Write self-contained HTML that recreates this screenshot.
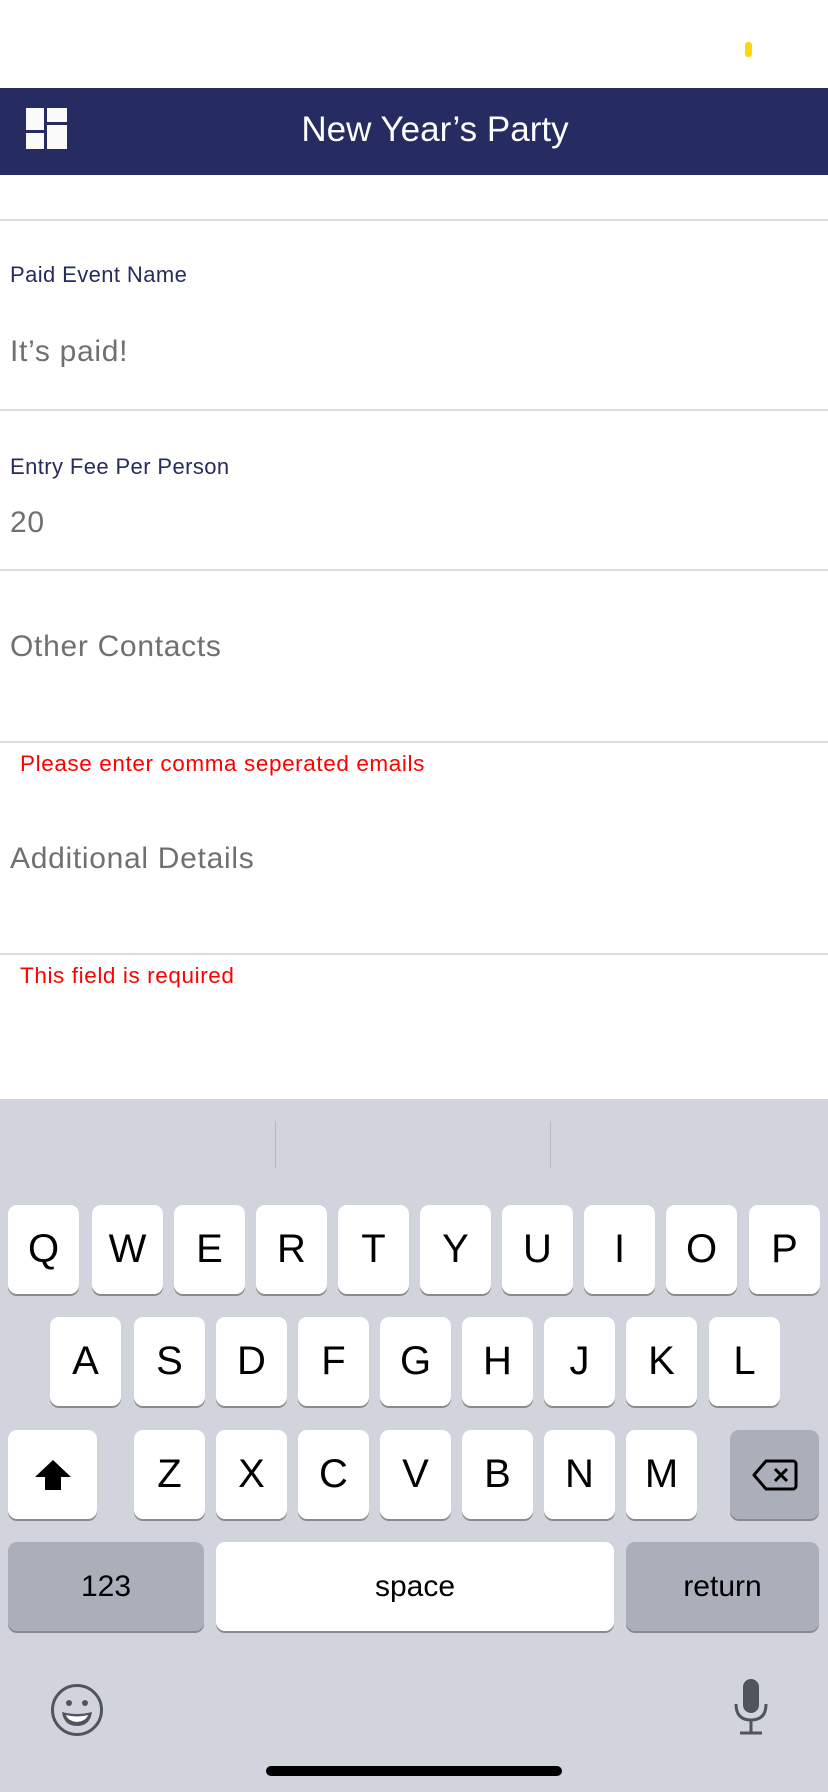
<!DOCTYPE html>
<html><head><meta charset="utf-8"><style>
*{margin:0;padding:0;box-sizing:border-box}
body{width:828px;height:1792px;position:relative;background:#fff;font-family:"Liberation Sans",sans-serif;overflow:hidden}
.a{position:absolute}
.line{position:absolute;left:0;width:828px;height:2px;background:#dcdcdc}
.lbl{position:absolute;left:10px;font-size:22px;letter-spacing:0.4px;color:#262b60}
.val{position:absolute;left:10px;font-size:30px;letter-spacing:0.7px;color:#707070}
.err{position:absolute;left:20px;font-size:22.5px;letter-spacing:0.6px;color:#fe0000}
.kb{position:absolute;left:0;top:1099px;width:828px;height:693px;background:#d1d4dc}
.k{position:absolute;width:71px;height:89px;background:#fff;border-radius:9px;box-shadow:0 2px 0 #898a8e;font-size:40px;color:#000;text-align:center;line-height:89px}
.g{background:#abafba}
</style></head><body>
<div class="a" style="left:745px;top:42px;width:7px;height:15px;border-radius:3px;background:#ffd60a"></div>
<div class="a" style="left:0;top:88px;width:828px;height:87px;background:#262b61"></div>
<svg class="a" style="left:26px;top:108px" width="41" height="41" viewBox="0 0 41 41"><rect x="0" y="0" width="18" height="22" fill="#fafafa"/><rect x="0" y="25" width="18" height="16" fill="#fafafa"/><rect x="21" y="0" width="20" height="14" fill="#fafafa"/><rect x="21" y="17" width="20" height="24" fill="#fafafa"/></svg>
<div class="a" style="left:0;top:110px;width:870px;text-align:center;font-size:35px;color:#fff">New Year’s Party</div>
<div class="line" style="top:219px"></div>
<div class="lbl" style="top:262px">Paid Event Name</div>
<div class="val" style="top:335px">It’s paid!</div>
<div class="line" style="top:409px"></div>
<div class="lbl" style="top:454px">Entry Fee Per Person</div>
<div class="val" style="top:506px">20</div>
<div class="line" style="top:569px"></div>
<div class="val" style="top:630px">Other Contacts</div>
<div class="line" style="top:741px"></div>
<div class="err" style="top:751px">Please enter comma seperated emails</div>
<div class="val" style="top:842px">Additional Details</div>
<div class="line" style="top:953px"></div>
<div class="err" style="top:963px">This field is required</div>
<div class="kb">
<div class="a" style="left:275px;top:22px;width:1px;height:47px;background:#b5b8bf"></div>
<div class="a" style="left:550px;top:22px;width:1px;height:47px;background:#b5b8bf"></div>
</div>
<div class="k" style="left:8px;top:1205px">Q</div>
<div class="k" style="left:92px;top:1205px">W</div>
<div class="k" style="left:174px;top:1205px">E</div>
<div class="k" style="left:256px;top:1205px">R</div>
<div class="k" style="left:338px;top:1205px">T</div>
<div class="k" style="left:420px;top:1205px">Y</div>
<div class="k" style="left:502px;top:1205px">U</div>
<div class="k" style="left:584px;top:1205px">I</div>
<div class="k" style="left:666px;top:1205px">O</div>
<div class="k" style="left:749px;top:1205px">P</div>
<div class="k" style="left:50px;top:1317px">A</div>
<div class="k" style="left:134px;top:1317px">S</div>
<div class="k" style="left:216px;top:1317px">D</div>
<div class="k" style="left:298px;top:1317px">F</div>
<div class="k" style="left:380px;top:1317px">G</div>
<div class="k" style="left:462px;top:1317px">H</div>
<div class="k" style="left:544px;top:1317px">J</div>
<div class="k" style="left:626px;top:1317px">K</div>
<div class="k" style="left:709px;top:1317px">L</div>
<div class="k" style="left:8px;top:1430px;width:89px"><svg width="40" height="34" viewBox="0 0 40 34" style="margin-top:28px"><path d="M20 2 L38 19 H28 V32 H12 V19 H2 Z" fill="#000"/></svg></div>
<div class="k" style="left:134px;top:1430px">Z</div>
<div class="k" style="left:216px;top:1430px">X</div>
<div class="k" style="left:298px;top:1430px">C</div>
<div class="k" style="left:380px;top:1430px">V</div>
<div class="k" style="left:462px;top:1430px">B</div>
<div class="k" style="left:544px;top:1430px">N</div>
<div class="k" style="left:626px;top:1430px">M</div>
<div class="k g" style="left:730px;top:1430px;width:89px"><svg width="48" height="34" viewBox="0 0 48 34" style="margin-top:28px"><path d="M15 3 H42 a3 3 0 0 1 3 3 V28 a3 3 0 0 1 -3 3 H15 L3 17 Z" fill="none" stroke="#000" stroke-width="3" stroke-linejoin="round"/><path d="M24 11 L36 23 M36 11 L24 23" stroke="#000" stroke-width="3"/></svg></div>
<div class="k g" style="left:8px;top:1542px;width:196px;font-size:30px">123</div>
<div class="k" style="left:216px;top:1542px;width:398px;font-size:30px">space</div>
<div class="k g" style="left:626px;top:1542px;width:193px;font-size:30px">return</div>
<svg class="a" style="left:50px;top:1683px" width="54" height="54" viewBox="0 0 54 54"><circle cx="27" cy="27" r="24.5" fill="none" stroke="#50545c" stroke-width="3"/><circle cx="19" cy="20" r="3" fill="#50545c"/><circle cx="35" cy="20" r="3" fill="#50545c"/><path d="M12 29 Q27 33 42 29 Q40 43 27 43 Q14 43 12 29 Z" fill="#50545c"/><path d="M16 32 Q27 35 38 32 Q36 38 27 39 Q18 38 16 32Z" fill="#fff"/></svg>
<svg class="a" style="left:733px;top:1678px" width="36" height="58" viewBox="0 0 36 58"><rect x="10" y="1" width="16" height="34" rx="8" fill="#50545c"/><path d="M3 26 Q3 42 18 42 Q33 42 33 26" fill="none" stroke="#50545c" stroke-width="3"/><path d="M18 42 V54 M7 55 H29" stroke="#50545c" stroke-width="3"/></svg>
<div class="a" style="left:266px;top:1766px;width:296px;height:10px;border-radius:5px;background:#000"></div>
</body></html>
